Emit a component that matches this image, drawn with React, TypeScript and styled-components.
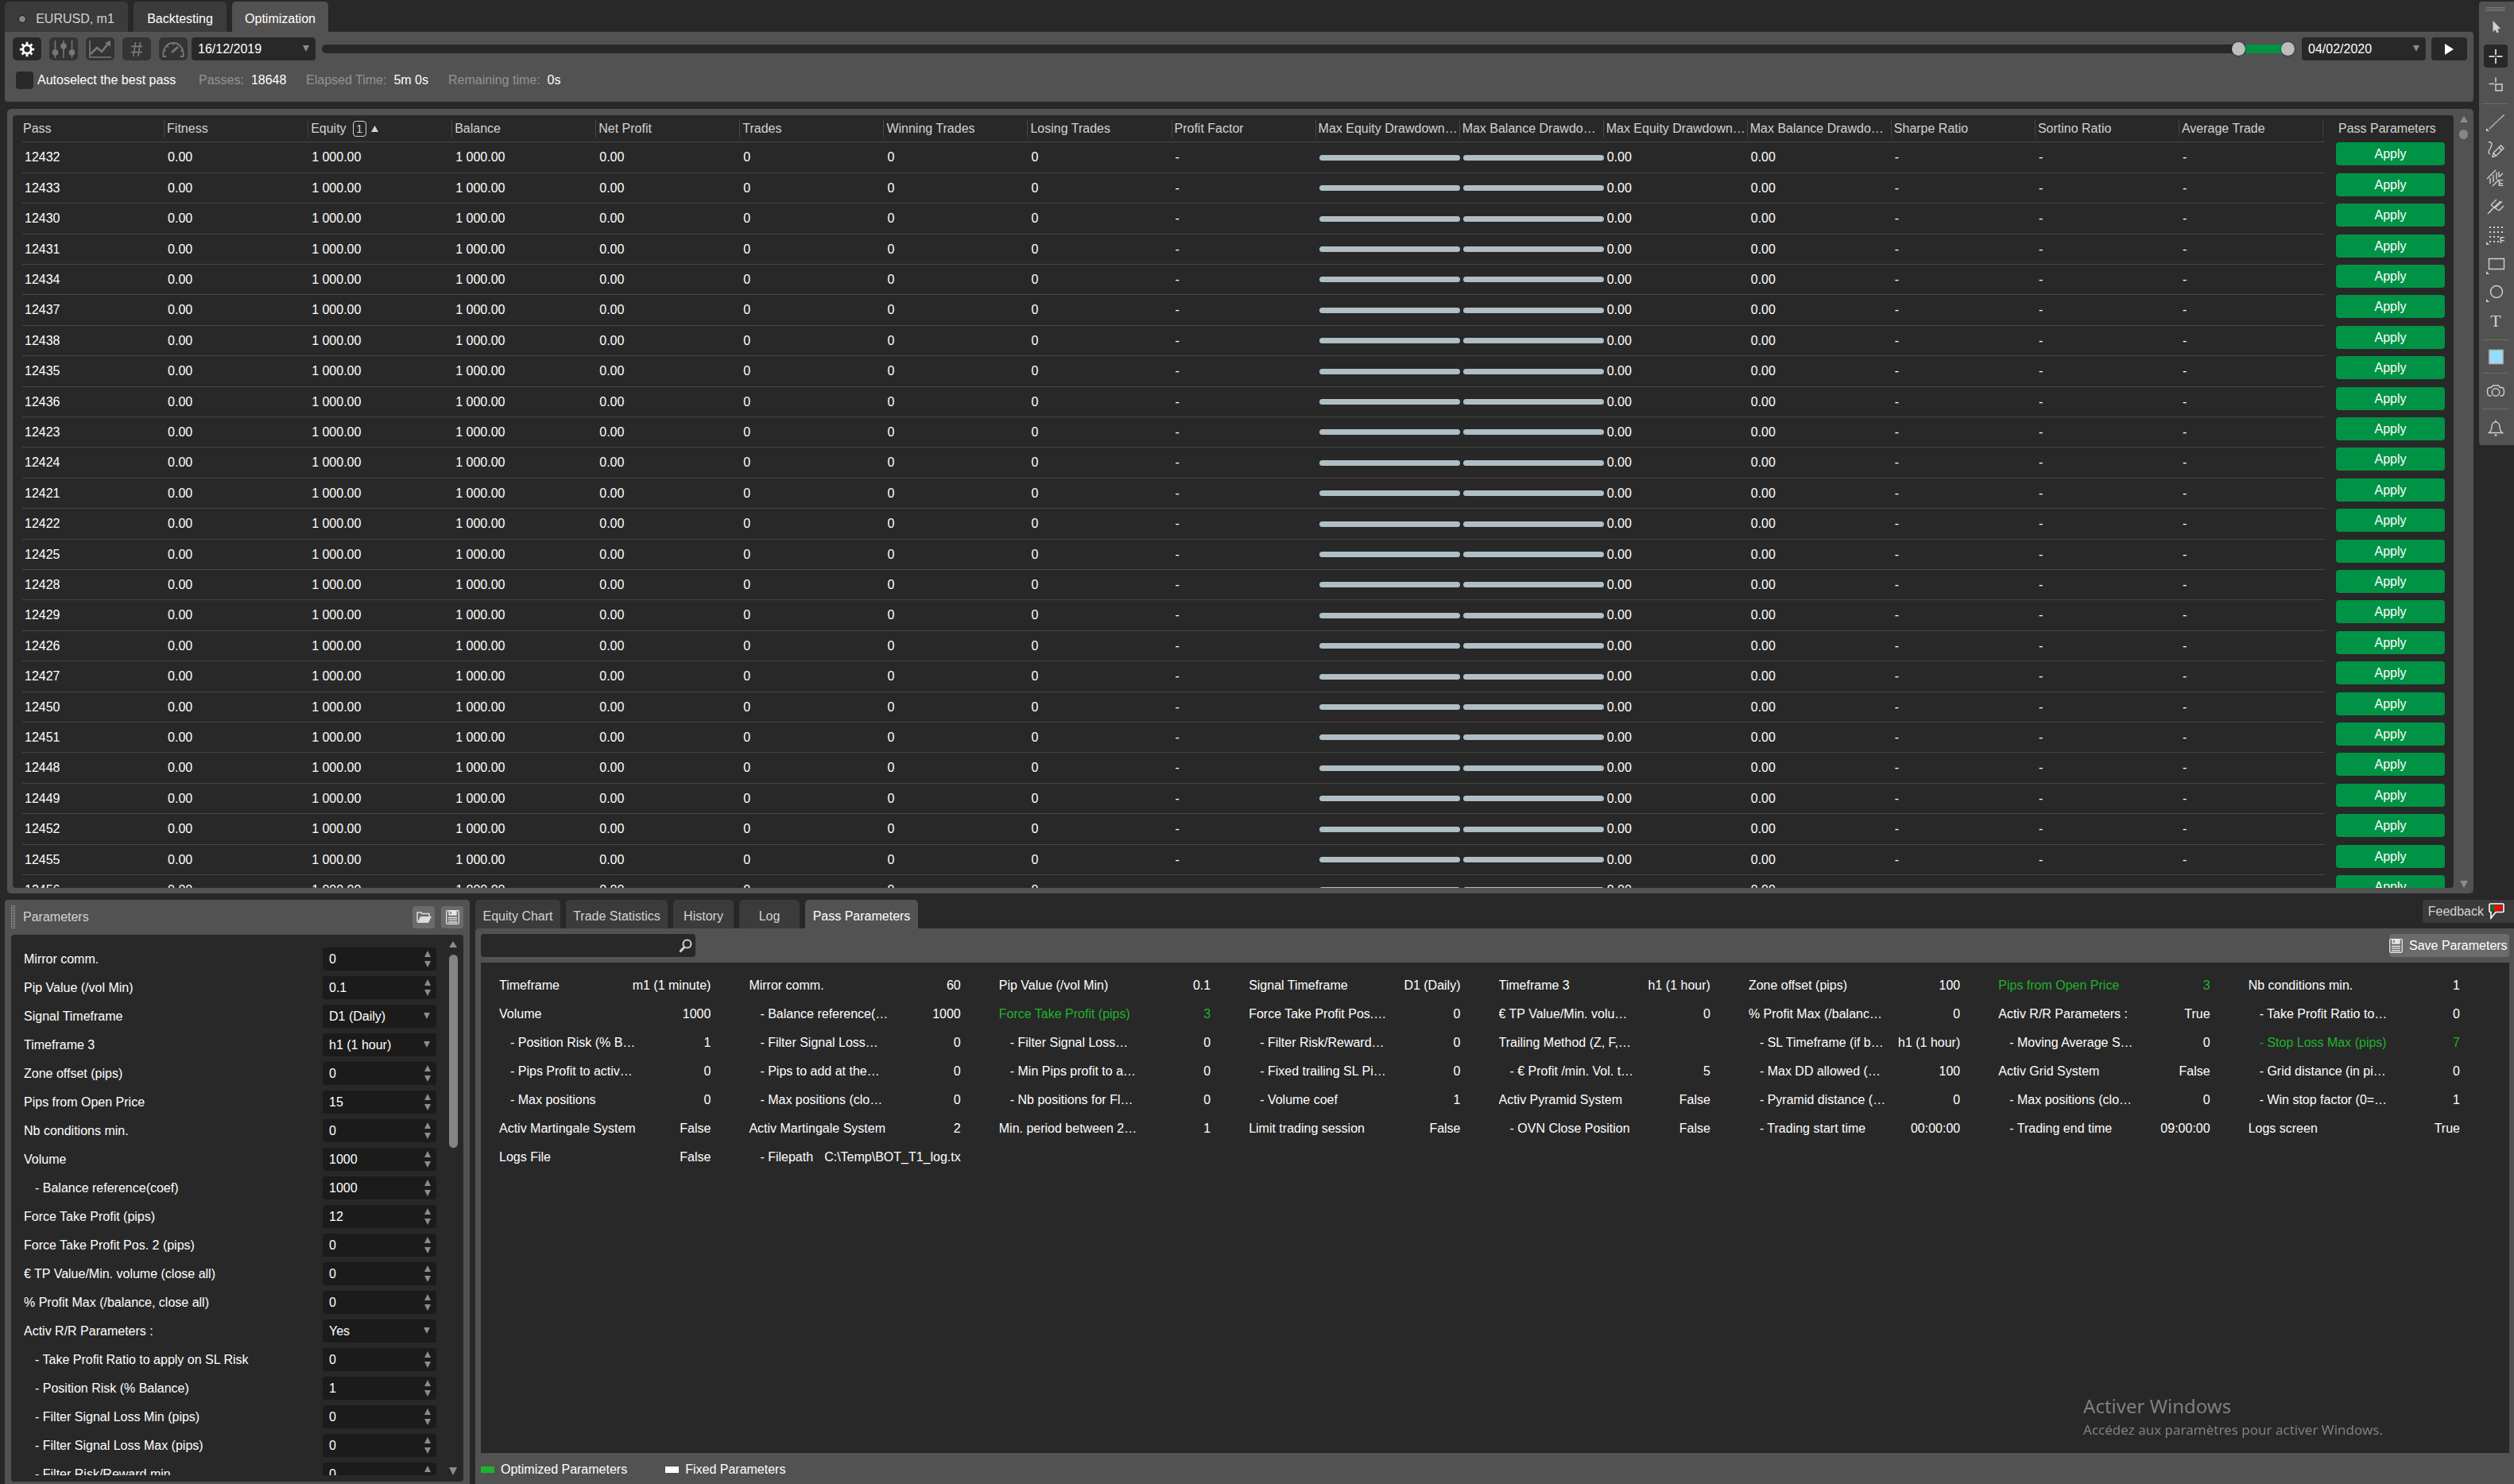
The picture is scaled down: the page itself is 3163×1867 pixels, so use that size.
import React, { useState } from 'react';
import styled, { createGlobalStyle, css } from 'styled-components';

const color = {
  page: '#282828',
  panel: '#525252',
  tab: '#3b3b3b',
  field: '#1b1b1b',
  line: '#464646',
  text: '#ffffff',
  soft: '#d2d2d2',
  muted: '#929292',
  icon: '#d0d0d0',
  green: '#009345',
  optimized: '#1fb32d',
  bar: '#b0bec5',
};

const GlobalStyle = createGlobalStyle`
  * { box-sizing: border-box; }
  body {
    margin: 0;
    background: ${color.page};
    color: ${color.text};
    font: 16px/20px "Liberation Sans", Arial, sans-serif;
    overflow: hidden;
  }
  button, input, select { font: inherit; color: inherit; border: 0; margin: 0; padding: 0; background: none; }
  svg { display: block; flex: none; }
`;

/* ---------- page frame ---------- */

const Page = styled.div`
  display: flex;
  flex-direction: column;
  height: 100vh;
`;
const Upper = styled.div`
  display: flex;
  flex: 1;
  min-height: 0;
  gap: 7px;
  padding: 2px 0 8px 6px;
`;
const Lower = styled.div`
  display: flex;
  flex: none;
  height: 735px;
  gap: 7px;
  padding-left: 6px;
`;
const Workspace = styled.main`
  display: flex;
  flex-direction: column;
  flex: 1;
  min-width: 0;
`;

/* ---------- tabs ---------- */

const TabBar = styled.div`
  display: flex;
  align-items: flex-end;
  gap: 7px;
`;
const Tab = styled.button<{ $active?: boolean; $soft?: boolean; $height: number; $min: number }>`
  display: flex;
  align-items: center;
  justify-content: center;
  gap: 12px;
  height: ${(p) => p.$height}px;
  min-width: ${(p) => p.$min}px;
  padding: 6px 6px 0;
  border-radius: 5px 5px 0 0;
  background: ${(p) => (p.$active ? color.panel : color.tab)};
  color: ${(p) => (p.$soft ? color.soft : color.text)};
  white-space: nowrap;
`;
const Dot = styled.span`
  width: 10px;
  height: 10px;
  border: 1px solid #1c1c1c;
  border-radius: 50%;
  background: #858585;
`;

/* ---------- optimization controls ---------- */

const Controls = styled.section`
  flex: none;
  height: 88px;
  padding: 7px 8px 0 10px;
  border-radius: 0 4px 4px 4px;
  background: ${color.panel};
`;
const ControlRow = styled.div`
  display: flex;
  align-items: center;
`;
const ToolButtons = styled.div`
  display: flex;
  gap: 10px;
  margin-right: 5px;
`;
const ToolButton = styled.button<{ $active?: boolean }>`
  display: grid;
  place-items: center;
  width: 36px;
  height: 29px;
  border-radius: 5px;
  background: ${(p) => (p.$active ? color.page : '#343434')};
  color: ${(p) => (p.$active ? '#ffffff' : '#787878')};
`;
const Picker = styled.div<{ $width: number; $dark?: boolean }>`
  position: relative;
  flex: none;
  width: ${(p) => p.$width}px;
  height: 29px;
  border-radius: 4px;
  background: ${(p) => (p.$dark ? color.field : color.page)};

  select {
    width: 100%;
    height: 100%;
    padding: 0 24px 0 8px;
    appearance: none;
    outline: none;
  }
  svg {
    position: absolute;
    right: 8px;
    top: 10px;
    pointer-events: none;
  }
`;
const RangeBox = styled.div`
  position: relative;
  flex: 1;
  height: 17px;
  margin: 0 9px 0 8px;
`;
const RangeTrack = styled.div`
  position: absolute;
  inset: 3px 0;
  border-radius: 6px;
  background: ${color.page};
`;
const RangeFill = styled.div`
  position: absolute;
  inset: 3px 9px 3px 0;
  background: ${color.green};
`;
const RangeInput = styled.input`
  position: absolute;
  inset: 0;
  width: 100%;
  height: 17px;
  appearance: none;
  pointer-events: none;

  &::-webkit-slider-thumb {
    appearance: none;
    width: 17px;
    height: 17px;
    border-radius: 50%;
    background: #bdbdbd;
    box-shadow: 0 0 3px rgba(0, 0, 0, 0.5);
    pointer-events: auto;
  }
`;
const PlayButton = styled.button`
  display: grid;
  place-items: center;
  width: 45px;
  height: 29px;
  margin-left: 7px;
  border-radius: 4px;
  background: ${color.page};
`;
const StatusRow = styled.div`
  display: flex;
  align-items: center;
  gap: 23px;
  margin-top: 14px;
  padding-left: 4px;
`;
const CheckLabel = styled.label`
  display: flex;
  align-items: center;
  gap: 5px;
  min-width: 207px;
`;
const CheckBox = styled.input`
  width: 22px;
  height: 22px;
  border-radius: 4px;
  background: ${color.page};
  appearance: none;
`;
const Stat = styled.span<{ $min?: number }>`
  display: flex;
  gap: 9px;
  min-width: ${(p) => p.$min ?? 0}px;
  color: ${color.muted};
  b { font-weight: 400; color: ${color.text}; }
`;

/* ---------- results table ---------- */

const TablePanel = styled.section`
  display: flex;
  flex: 1;
  min-height: 0;
  margin: 9px 0 0 3px;
  padding: 8px 0 7px 7px;
  border-radius: 5px;
  background: ${color.panel};
`;
const TableClip = styled.div`
  flex: 1;
  min-width: 0;
  padding-left: 12px;
  overflow: hidden;
  border-radius: 4px;
  background: ${color.page};
`;
const Table = styled.table`
  width: 100%;
  table-layout: fixed;
  border-collapse: separate;
  border-spacing: 0;

  th, td { padding: 0; text-align: left; font-weight: 400; white-space: nowrap; overflow: hidden; }
  th { padding: 6px 2px 5px 1px; border-bottom: 1px solid ${color.line}; color: ${color.soft}; }
  td { padding: 0 2px; height: 38px; border-bottom: 1px solid ${color.line}; }
  td:first-child { padding-left: 3px; }
  tr:nth-child(5n + 1) td, tr:nth-child(5n + 3) td { height: 39px; }
  th:last-child { padding-left: 17px; border-color: transparent; }
  td:last-child { padding: 0 11px 0 14px; border-bottom: 0; vertical-align: top; }
`;
const ActionCol = styled.col`
  width: 162px;
`;
const HeadCell = styled.div<{ $plain?: boolean }>`
  display: flex;
  align-items: center;
  height: 22px;
  overflow: hidden;
  border-right: ${(p) => (p.$plain ? '0' : `1px solid ${color.line}`)};
`;
const SortBadge = styled.span`
  display: grid;
  place-items: center;
  width: 17px;
  height: 20px;
  margin: 0 6px 0 8px;
  border: 1px solid ${color.soft};
  border-radius: 4px;
  font-size: 14px;
  line-height: 16px;
`;
const Bar = styled.div`
  height: 7px;
  border-radius: 4px;
  background: ${color.bar};
`;
const ApplyButton = styled.button`
  display: block;
  width: 100%;
  height: 29px;
  border-radius: 4px;
  background: ${color.green};
`;

/* ---------- scroll bars ---------- */

const Scroll = styled.div<{ $width: number; $padding: string }>`
  display: flex;
  flex-direction: column;
  flex: none;
  align-items: center;
  justify-content: space-between;
  width: ${(p) => p.$width}px;
  padding: ${(p) => p.$padding};
`;
const ScrollTop = styled.div<{ $gap: number }>`
  display: grid;
  justify-items: center;
  gap: ${(p) => p.$gap}px;
`;
const Thumb = styled.div<{ $height: number }>`
  width: 11px;
  height: ${(p) => p.$height}px;
  border-radius: 6px;
  background: #858585;
`;

/* ---------- drawing tools ---------- */

const SideBar = styled.aside`
  display: flex;
  flex-direction: column;
  flex: none;
  align-items: center;
  align-self: flex-start;
  width: 44px;
  padding: 7px 2px 6px 0;
  border-radius: 4px 0 0 4px;
  background: ${color.panel};
`;
const SideButton = styled.button<{ $active?: boolean; $height: number }>`
  display: grid;
  flex: none;
  place-items: center;
  width: 30px;
  height: ${(p) => p.$height}px;
  border-radius: 4px;
  color: ${(p) => (p.$active ? '#ffffff' : color.icon)};
  background: ${(p) => (p.$active ? color.page : 'none')};
`;
const SideRule = styled.hr`
  flex: none;
  width: 34px;
  height: 1px;
  margin: 5px 0 6px;
  border: 0;
  background: #6c6c6c;
`;

/* ---------- parameters panel ---------- */

const ParamsPanel = styled.section`
  display: flex;
  flex-direction: column;
  flex: none;
  width: 585px;
  padding: 0 8px 3px;
  border-radius: 4px 4px 0 0;
  background: ${color.panel};
`;
const ParamsHeader = styled.header`
  display: flex;
  flex: none;
  align-items: center;
  gap: 8px;
  height: 44px;
`;
const ParamsTitle = styled.h2`
  flex: 1;
  margin: 0 0 0 2px;
  font-size: 16px;
  font-weight: 400;
  color: ${color.soft};
`;
const SquareButton = styled.button`
  display: grid;
  place-items: center;
  width: 28px;
  height: 28px;
  border-radius: 4px;
  background: #6b6b6b;
`;
const ParamsBody = styled.div`
  display: flex;
  flex: 1;
  min-height: 0;
  padding: 0 0 8px 16px;
  border-radius: 4px;
  background: ${color.page};
`;
const ParamsList = styled.div`
  flex: 1;
  padding-top: 16px;
  overflow: hidden;
`;
const ParamRow = styled.div<{ $indent?: boolean }>`
  display: flex;
  align-items: center;
  justify-content: space-between;
  height: 29px;
  margin-bottom: 7px;
  label { padding-left: ${(p) => (p.$indent ? 14 : 0)}px; white-space: nowrap; }
`;
const NumberBox = styled.div`
  display: flex;
  align-items: center;
  width: 143px;
  height: 29px;
  padding: 0 7px 0 8px;
  border-radius: 4px;
  background: ${color.field};
  input { flex: 1; min-width: 0; outline: none; }
`;
const Steps = styled.div`
  display: grid;
  gap: 5px;
  button { display: block; }
`;

/* ---------- pass panel ---------- */

const PassPanel = styled.section`
  display: flex;
  flex-direction: column;
  flex: 1;
  min-width: 0;
`;
const PassTop = styled.div`
  display: flex;
  align-items: flex-start;
  justify-content: space-between;
`;
const Feedback = styled.button`
  display: flex;
  align-items: center;
  gap: 6px;
  height: 29px;
  padding: 0 12px 0 7px;
  border-radius: 4px 0 0 4px;
  background: ${color.tab};
  color: ${color.soft};
`;
const PassBody = styled.div`
  display: flex;
  flex-direction: column;
  flex: 1;
  min-height: 0;
  padding: 0 6px 0 7px;
  border-radius: 4px 0 0 0;
  background: ${color.panel};
`;
const PassTools = styled.div`
  display: flex;
  justify-content: space-between;
  padding: 7px 0;
`;
const SearchBox = styled.label`
  display: flex;
  align-items: center;
  width: 270px;
  height: 29px;
  padding: 0 4px 0 8px;
  border-radius: 4px;
  background: ${color.page};
  input { flex: 1; min-width: 0; outline: none; }
`;
const SaveButton = styled.button`
  display: flex;
  align-items: center;
  gap: 8px;
  min-width: 151px;
  height: 29px;
  border-radius: 4px;
  background: #6b6b6b;
`;
const PassArea = styled.div`
  flex: 1;
  min-height: 0;
  padding: 11px 14px 0 23px;
  background: ${color.page};
`;
const PassGrid = styled.dl`
  display: grid;
  grid-template-columns: repeat(8, minmax(0, 1fr));
  grid-auto-rows: 36px;
  margin: 0;
`;
const PassItem = styled.div<{ $optimized?: boolean; $indent?: boolean }>`
  display: flex;
  align-items: center;
  justify-content: space-between;
  gap: 10px;
  margin-right: 48px;
  overflow: hidden;
  white-space: nowrap;
  ${(p) => p.$optimized && css`color: ${color.optimized};`}
  dt { padding-left: ${(p) => (p.$indent ? 14 : 0)}px; }
  dd { margin: 0; }
`;
const Legend = styled.footer`
  display: flex;
  flex: none;
  align-items: center;
  gap: 48px;
  height: 39px;
  padding-top: 3px;
`;
const LegendItem = styled.span`
  display: flex;
  align-items: center;
  gap: 8px;
`;
const Swatch = styled.i<{ $color: string }>`
  width: 17px;
  height: 8px;
  background: ${(p) => p.$color};
`;

const Watermark = styled.div`
  position: fixed;
  right: 165px;
  bottom: 56px;
  color: #808080;
  font-family: "Noto Sans", sans-serif;
  pointer-events: none;
  strong { display: block; font-size: 24px; line-height: 36px; font-weight: 400; }
  span { display: block; font-size: 17px; line-height: 24px; }
`;

/* ---------- icons ---------- */

const Triangle = ({ up, w = 8, h = 8, fill = '#8c8c8c' }: { up?: boolean; w?: number; h?: number; fill?: string }) => (
  <svg width={w} height={h} viewBox="0 0 8 8" preserveAspectRatio="none" fill={fill}>
    <path d={up ? 'M4 0 8 8H0z' : 'M0 0h8L4 8z'} />
  </svg>
);

const Stroke = ({ size = 24, width = 1.5, children }: { size?: number; width?: number; children: React.ReactNode }) => (
  <svg width={size} height={size} viewBox="0 0 24 24" fill="none" stroke="currentColor" strokeWidth={width}>
    {children}
  </svg>
);

const GearIcon = () => (
  <Stroke size={22}>
    <circle cx="12" cy="12" r="5.6" strokeWidth="3" />
    <path
      strokeWidth="3"
      d="M12 2v4M12 18v4M2 12h4M18 12h4M5 5l2.800 2.800M16.200 16.200 19 19M19 5l-2.800 2.800M7.800 16.200 5 19"
    />
  </Stroke>
);
const SlidersIcon = () => (
  <svg width="30" height="24" viewBox="0 0 30 24" stroke="currentColor" fill="currentColor" strokeWidth="1.6">
    <path d="M4.500 1v22M15 1v22M25.500 1v22" />
    <circle cx="4.500" cy="16" r="3" />
    <circle cx="15" cy="8" r="3" />
    <circle cx="25.500" cy="16" r="3" />
  </svg>
);
const ChartIcon = () => (
  <svg width="30" height="24" viewBox="0 0 30 24" stroke="currentColor" fill="none" strokeWidth="1.6">
    <path d="M2 1v21h27" />
    <path d="m3 18 8-8 6 5 8-10" strokeWidth="2.600" />
    <path d="M28 1v8l-7-5z" fill="currentColor" stroke="none" />
  </svg>
);
const HashIcon = () => (
  <Stroke size={22} width={1.8}>
    <path d="M10.500 2 7.500 22M17 2l-3 20M4.500 8H20M4 16h15.500" />
  </Stroke>
);
const GaugeIcon = () => (
  <svg width="30" height="24" viewBox="0 0 30 24" stroke="currentColor" fill="none" strokeWidth="1.8">
    <path d="M6 21H2.500C1 12 7 4 15 4s14 8 12.500 17H24" />
    <path d="m13 16 8-7" strokeWidth="2.600" />
    <path d="M15 4v3M7 7.500l2 2M3 14h3M24 14h3" strokeWidth="1.300" />
  </svg>
);
const PlayIcon = () => (
  <svg width="11" height="14" viewBox="0 0 11 14" fill="currentColor"><path d="M0 0v14l11-7z" /></svg>
);
const CursorIcon = () => (
  <Stroke>
    <path d="M8.500 3v14l3-2.600 2 4 2.500-1-1.800-4 3.800-.4z" fill="currentColor" stroke="none" />
  </Stroke>
);
const CrosshairIcon = () => (
  <Stroke><path d="M12 3v7M12 14v7M3.500 12h7M13.500 12h7M11.500 12h1" /></Stroke>
);
const CrosshairBoxIcon = () => (
  <Stroke><path d="M12 4.500v6M3.500 12.500h7M12 13h8v8h-8z" /></Stroke>
);
const Corner = ({ y = 20 }: { y?: number }) => (
  <path d={`M1 ${y}v4h4z`} fill="currentColor" stroke="none" />
);
const ToolSvg = ({ children }: { children: React.ReactNode }) => (
  <svg width="26" height="26" viewBox="0 0 26 26" fill="none" stroke="currentColor" strokeWidth="1.400">
    {children}
  </svg>
);
const LineIcon = () => (
  <ToolSvg><path d="M5 21 24 3" strokeDasharray="2 .6" /><Corner /></ToolSvg>
);
const PencilIcon = () => (
  <ToolSvg>
    <path d="M4 4c4-1 5 2 3 6s-5 7-1 9" />
    <path d="M9 22.500l1-5L19.500 8l3.500 3.500-9.500 9.500zM17 10.500l3.500 3.500M10 17.500l3.500 3.500" />
  </ToolSvg>
);
const ElliottIcon = () => (
  <ToolSvg>
    <path d="M2 14 13 3M6 20v-7M10 18V9M14 15V6M17 12V5M9 23l8-8M18 11l4-4" />
    <text x="16" y="23" fontSize="10" fontWeight="700" fontFamily="Liberation Sans" fill="currentColor" stroke="none">E</text>
  </ToolSvg>
);
const ForkIcon = () => (
  <ToolSvg><path d="M3 22 19 6M7 11l10 7M7 11l7-7M17 18l6-6M12 14.500l9-8M6 20l2-4" strokeWidth="1.300" /></ToolSvg>
);
const FibIcon = () => (
  <ToolSvg>
    <path d="M5 3h20M5 9h20M5 15h20M5 21h12" strokeWidth="2" strokeDasharray="2 3" />
    <rect x="17" y="12" width="9" height="14" fill={color.panel} stroke="none" />
    <text x="18" y="23" fontSize="10" fontWeight="700" fontFamily="Liberation Sans" fill="currentColor" stroke="none">F</text>
    <Corner y={21} />
  </ToolSvg>
);
const RectIcon = () => (
  <ToolSvg><path d="M4.500 6.500h19v13h-19z" /><Corner y={22} /></ToolSvg>
);
const CircleIcon = () => (
  <ToolSvg><circle cx="14" cy="12" r="7.500" /><Corner y={21} /></ToolSvg>
);
const TextIcon = () => (
  <ToolSvg>
    <text x="13" y="20" textAnchor="middle" fontSize="22" fontFamily="Liberation Serif" fill="currentColor" stroke="none">T</text>
  </ToolSvg>
);
const ColorIcon = () => (
  <ToolSvg><rect x="5" y="4.500" width="17" height="17" fill="#96dcfb" stroke="#b5b5b5" strokeWidth="1.600" /></ToolSvg>
);
const CameraIcon = () => (
  <ToolSvg>
    <path d="M7.500 7.500l2-2.500h7l2 2.500h2c2 0 3 2 3 5s-1 5.500-3 5.500h-2M7.500 18h-2c-2 0-3-2.500-3-5.500s1-5 3-5h2" />
    <circle cx="13" cy="13.500" r="4.700" />
  </ToolSvg>
);
const BellIcon = () => (
  <ToolSvg>
    <path d="M4.500 19.500c2.500-2 3.500-4 3.500-8 0-3 2-5.500 5-5.500s5 2.500 5 5.500c0 4 1 6 3.500 8zM13 6V3.500" />
    <path d="M11.500 22.500h3" strokeWidth="2" />
  </ToolSvg>
);
const GripDots = () => (
  <svg width="24" height="5" viewBox="0 0 24 5" stroke="#a0a0a0" strokeWidth="1">
    <path d="M0 .5h24M0 2.500h24M0 4.500h24" strokeDasharray="1 1" />
  </svg>
);
const PanelGrip = () => (
  <svg width="5" height="30" viewBox="0 0 5 30" stroke="#b4b4b4" strokeWidth="1">
    <path d="M.5 0v30M2.500 0v30M4.500 0v30" strokeDasharray="1 1" />
  </svg>
);
const FolderIcon = () => (
  <svg width="19" height="14" viewBox="0 0 19 14" fill="none" stroke="#dcdcdc" strokeWidth="1.500">
    <path d="M1 13V1h5l1 1.500h9V6" />
    <path d="M5 6h14l-4 8H1z" fill="#dcdcdc" stroke="none" />
  </svg>
);
const SaveIcon = () => (
  <svg width="17" height="18" viewBox="0 0 17 18" fill="none" stroke="#e6e6e6" strokeWidth="1.300">
    <rect x=".7" y=".7" width="15.600" height="16.600" rx="1.500" />
    <path d="M4 1h9v5H4z" fill="#e6e6e6" />
    <path d="M6 2v3" stroke="#6b6b6b" strokeWidth="1.500" />
    <path d="M3 9.500h11M3 12.200h11M3 15h11" />
  </svg>
);
const SearchIcon = () => (
  <svg width="17" height="18" viewBox="0 0 17 18" fill="none" stroke="#d0d0d0">
    <circle cx="10.500" cy="6.500" r="5" strokeWidth="2" />
    <path d="M7 10.500 1.500 16.500" strokeWidth="3" />
  </svg>
);
const FlagIcon = () => (
  <svg width="20" height="21" viewBox="0 0 20 21">
    <path d="M2.500 1h15.500q1 0 1 1v8.500q0 1-1 1H9L3 19v-7.500q-2 0-2-1.500V2.500Q1 1 2.500 1z" fill={color.tab} stroke="#ffffff" strokeWidth="1.600" />
    <path d="M3.500 3h4v6.500h-4z" fill="#0c7a12" />
    <path d="M7 3h10.500v6.500H7z" fill="#fb0505" />
  </svg>
);

/* ---------- data ---------- */

const passes = [
  12432, 12433, 12430, 12431, 12434, 12437, 12438, 12435, 12436, 12423, 12424, 12421, 12422,
  12425, 12428, 12429, 12426, 12427, 12450, 12451, 12448, 12449, 12452, 12455, 12456,
];

const columns = [
  'Pass', 'Fitness', 'Equity', 'Balance', 'Net Profit', 'Trades', 'Winning Trades', 'Losing Trades',
  'Profit Factor', 'Max Equity Drawdown…', 'Max Balance Drawdo…', 'Max Equity Drawdown…',
  'Max Balance Drawdo…', 'Sharpe Ratio', 'Sortino Ratio', 'Average Trade',
];

const BAR = 'bar';
const values = ['0.00', '1 000.00', '1 000.00', '0.00', '0', '0', '0', '-', BAR, BAR, '0.00', '0.00', '-', '-', '-'];

type Param = { label: string; value: string; pick?: boolean };
const params: Param[] = [
  { label: 'Mirror comm.', value: '0' },
  { label: 'Pip Value (/vol Min)', value: '0.1' },
  { label: 'Signal Timeframe', value: 'D1 (Daily)', pick: true },
  { label: 'Timeframe 3', value: 'h1 (1 hour)', pick: true },
  { label: 'Zone offset (pips)', value: '0' },
  { label: 'Pips from Open Price', value: '15' },
  { label: 'Nb conditions min.', value: '0' },
  { label: 'Volume', value: '1000' },
  { label: '- Balance reference(coef)', value: '1000' },
  { label: 'Force Take Profit (pips)', value: '12' },
  { label: 'Force Take Profit Pos. 2 (pips)', value: '0' },
  { label: '€ TP Value/Min. volume (close all)', value: '0' },
  { label: '% Profit Max (/balance, close all)', value: '0' },
  { label: 'Activ R/R Parameters :', value: 'Yes', pick: true },
  { label: '- Take Profit Ratio to apply on SL Risk', value: '0' },
  { label: '- Position Risk (% Balance)', value: '1' },
  { label: '- Filter Signal Loss Min (pips)', value: '0' },
  { label: '- Filter Signal Loss Max (pips)', value: '0' },
  { label: '- Filter Risk/Reward min', value: '0' },
];

const passParams: [string, string, boolean?][] = [
  ['Timeframe', 'm1 (1 minute)'],
  ['Mirror comm.', '60'],
  ['Pip Value (/vol Min)', '0.1'],
  ['Signal Timeframe', 'D1 (Daily)'],
  ['Timeframe 3', 'h1 (1 hour)'],
  ['Zone offset (pips)', '100'],
  ['Pips from Open Price', '3', true],
  ['Nb conditions min.', '1'],
  ['Volume', '1000'],
  ['- Balance reference(…', '1000'],
  ['Force Take Profit (pips)', '3', true],
  ['Force Take Profit Pos.…', '0'],
  ['€ TP Value/Min. volu…', '0'],
  ['% Profit Max (/balanc…', '0'],
  ['Activ R/R Parameters :', 'True'],
  ['- Take Profit Ratio to…', '0'],
  ['- Position Risk (% B…', '1'],
  ['- Filter Signal Loss…', '0'],
  ['- Filter Signal Loss…', '0'],
  ['- Filter Risk/Reward…', '0'],
  ['Trailing Method (Z, F,…', ''],
  ['- SL Timeframe (if b…', 'h1 (1 hour)'],
  ['- Moving Average S…', '0'],
  ['- Stop Loss Max (pips)', '7', true],
  ['- Pips Profit to activ…', '0'],
  ['- Pips to add at the…', '0'],
  ['- Min Pips profit to a…', '0'],
  ['- Fixed trailing SL Pi…', '0'],
  ['- € Profit /min. Vol. t…', '5'],
  ['- Max DD allowed (…', '100'],
  ['Activ Grid System', 'False'],
  ['- Grid distance (in pi…', '0'],
  ['- Max positions', '0'],
  ['- Max positions (clo…', '0'],
  ['- Nb positions for Fl…', '0'],
  ['- Volume coef', '1'],
  ['Activ Pyramid System', 'False'],
  ['- Pyramid distance (…', '0'],
  ['- Max positions (clo…', '0'],
  ['- Win stop factor (0=…', '1'],
  ['Activ Martingale System', 'False'],
  ['Activ Martingale System', '2'],
  ['Min. period between 2…', '1'],
  ['Limit trading session', 'False'],
  ['- OVN Close Position', 'False'],
  ['- Trading start time', '00:00:00'],
  ['- Trading end time', '09:00:00'],
  ['Logs screen', 'True'],
  ['Logs File', 'False'],
  ['- Filepath', 'C:\\Temp\\BOT_T1_log.tx'],
];

/* ---------- components ---------- */

const Select = ({ id, label, value, width, dark }: { id: string; label?: string; value: string; width: number; dark?: boolean }) => (
  <Picker $width={width} $dark={dark}>
    <select id={id} aria-label={label} defaultValue={value}>
      <option>{value}</option>
    </select>
    <Triangle />
  </Picker>
);

const DateRange = () => {
  const [from, setFrom] = useState(975);
  const [to, setTo] = useState(1000);
  return (
    <RangeBox>
      <RangeTrack />
      <RangeFill style={{ left: `${from / 10}%`, right: to === 1000 ? 9 : `${100 - to / 10}%` }} />
      <RangeInput type="range" aria-label="Start date" min={0} max={1000} value={from} onChange={(e) => setFrom(+e.target.value)} />
      <RangeInput type="range" aria-label="End date" min={0} max={1000} value={to} onChange={(e) => setTo(+e.target.value)} />
    </RangeBox>
  );
};

const ControlsPanel = () => (
  <Controls>
    <ControlRow>
      <ToolButtons>
        <ToolButton $active aria-label="Settings"><GearIcon /></ToolButton>
        <ToolButton aria-label="Parameters"><SlidersIcon /></ToolButton>
        <ToolButton aria-label="Criteria"><ChartIcon /></ToolButton>
        <ToolButton aria-label="Method"><HashIcon /></ToolButton>
        <ToolButton aria-label="Resources"><GaugeIcon /></ToolButton>
      </ToolButtons>
      <Select id="from" label="From" value="16/12/2019" width={156} />
      <DateRange />
      <Select id="to" label="To" value="04/02/2020" width={156} />
      <PlayButton aria-label="Start"><PlayIcon /></PlayButton>
    </ControlRow>
    <StatusRow>
      <CheckLabel><CheckBox type="checkbox" />Autoselect the best pass</CheckLabel>
      <Stat $min={112}>Passes: <b>18648</b></Stat>
      <Stat $min={156}>Elapsed Time: <b>5m 0s</b></Stat>
      <Stat>Remaining time: <b>0s</b></Stat>
    </StatusRow>
  </Controls>
);

const ResultsTable = () => (
  <TablePanel>
    <TableClip>
      <Table>
        <colgroup>
          {columns.map((_, i) => <col key={i} />)}
          <ActionCol />
        </colgroup>
        <thead>
          <tr>
            {columns.map((name, i) => (
              <th key={i}>
                <HeadCell>
                  {name}
                  {name === 'Equity' && <><SortBadge>1</SortBadge><Triangle up w={9} fill={color.soft} /></>}
                </HeadCell>
              </th>
            ))}
            <th><HeadCell $plain>Pass Parameters</HeadCell></th>
          </tr>
        </thead>
        <tbody>
          {passes.map((pass) => (
            <tr key={pass}>
              <td>{pass}</td>
              {values.map((v, i) => <td key={i}>{v === BAR ? <Bar /> : v}</td>)}
              <td><ApplyButton>Apply</ApplyButton></td>
            </tr>
          ))}
        </tbody>
      </Table>
    </TableClip>
    <Scroll $width={25} $padding="1px 0 0">
      <ScrollTop $gap={9}><Triangle up w={10} /><Thumb $height={12} /></ScrollTop>
      <Triangle w={10} h={9} />
    </Scroll>
  </TablePanel>
);

const DrawingTools = () => (
  <SideBar>
    <GripDots />
    <SideButton $height={42} aria-label="Pointer"><CursorIcon /></SideButton>
    <SideButton $active $height={29} aria-label="Crosshair"><CrosshairIcon /></SideButton>
    <SideButton $height={40} aria-label="Crosshair with market snap"><CrosshairBoxIcon /></SideButton>
    <SideRule />
    <SideButton $height={33} aria-label="Trend line"><LineIcon /></SideButton>
    <SideButton $height={36} aria-label="Pencil"><PencilIcon /></SideButton>
    <SideButton $height={36} aria-label="Equidistant channel"><ElliottIcon /></SideButton>
    <SideButton $height={36} aria-label="Pitchfork"><ForkIcon /></SideButton>
    <SideButton $height={36} aria-label="Fibonacci"><FibIcon /></SideButton>
    <SideButton $height={36} aria-label="Rectangle"><RectIcon /></SideButton>
    <SideButton $height={36} aria-label="Ellipse"><CircleIcon /></SideButton>
    <SideButton $height={36} aria-label="Text"><TextIcon /></SideButton>
    <SideRule />
    <SideButton $height={30} aria-label="Colour"><ColorIcon /></SideButton>
    <SideRule />
    <SideButton $height={33} aria-label="Snapshot"><CameraIcon /></SideButton>
    <SideRule />
    <SideButton $height={33} aria-label="Alerts"><BellIcon /></SideButton>
  </SideBar>
);

const Parameters = () => (
  <ParamsPanel>
    <ParamsHeader>
      <PanelGrip />
      <ParamsTitle>Parameters</ParamsTitle>
      <SquareButton aria-label="Open"><FolderIcon /></SquareButton>
      <SquareButton aria-label="Save"><SaveIcon /></SquareButton>
    </ParamsHeader>
    <ParamsBody>
      <ParamsList>
        {params.map((p, i) => (
          <ParamRow key={p.label} $indent={p.label.startsWith('-')}>
            <label htmlFor={`param-${i}`}>{p.label}</label>
            {p.pick ? (
              <Select id={`param-${i}`} value={p.value} width={143} dark />
            ) : (
              <NumberBox>
                <input id={`param-${i}`} inputMode="decimal" defaultValue={p.value} />
                <Steps>
                  <button aria-label={`Increase ${p.label}`}><Triangle up /></button>
                  <button aria-label={`Decrease ${p.label}`}><Triangle /></button>
                </Steps>
              </NumberBox>
            )}
          </ParamRow>
        ))}
      </ParamsList>
      <Scroll $width={34} $padding="8px 0 0 8px">
        <ScrollTop $gap={9}><Triangle up w={10} /><Thumb $height={243} /></ScrollTop>
        <Triangle w={10} h={10} />
      </Scroll>
    </ParamsBody>
  </ParamsPanel>
);

const PassDetails = () => (
  <PassPanel>
    <PassTop>
      <TabBar>
        <Tab $soft $height={36} $min={107}>Equity Chart</Tab>
        <Tab $soft $height={36} $min={128}>Trade Statistics</Tab>
        <Tab $soft $height={36} $min={76}>History</Tab>
        <Tab $soft $height={36} $min={76}>Log</Tab>
        <Tab $active $height={36} $min={142}>Pass Parameters</Tab>
      </TabBar>
      <Feedback>Feedback <FlagIcon /></Feedback>
    </PassTop>
    <PassBody>
      <PassTools>
        <SearchBox><input aria-label="Search" /><SearchIcon /></SearchBox>
        <SaveButton><SaveIcon />Save Parameters</SaveButton>
      </PassTools>
      <PassArea>
        <PassGrid>
          {passParams.map(([name, value, optimized], i) => (
            <PassItem key={i} $optimized={optimized} $indent={name.startsWith('-')}>
              <dt>{name}</dt>
              <dd>{value}</dd>
            </PassItem>
          ))}
        </PassGrid>
      </PassArea>
      <Legend>
        <LegendItem><Swatch $color={color.optimized} />Optimized Parameters</LegendItem>
        <LegendItem><Swatch $color="#ffffff" />Fixed Parameters</LegendItem>
      </Legend>
    </PassBody>
  </PassPanel>
);

export default function App() {
  return (
    <>
      <GlobalStyle />
      <Page>
        <Upper>
          <Workspace>
            <TabBar>
              <Tab $soft $height={38} $min={155}><Dot />EURUSD, m1</Tab>
              <Tab $height={38} $min={117}>Backtesting</Tab>
              <Tab $active $height={38} $min={121}>Optimization</Tab>
            </TabBar>
            <ControlsPanel />
            <ResultsTable />
          </Workspace>
          <DrawingTools />
        </Upper>
        <Lower>
          <Parameters />
          <PassDetails />
        </Lower>
      </Page>
      <Watermark>
        <strong>Activer Windows</strong>
        <span>Accédez aux paramètres pour activer Windows.</span>
      </Watermark>
    </>
  );
}
